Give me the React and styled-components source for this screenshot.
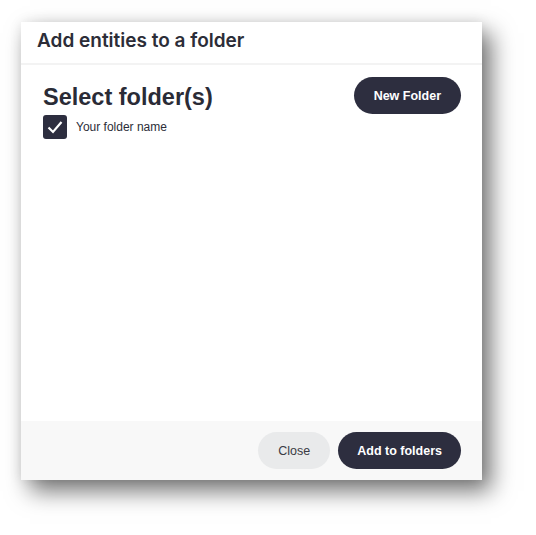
import React, { useState } from 'react';
import styled, { createGlobalStyle } from 'styled-components';

const GlobalStyle = createGlobalStyle`
  body {
    margin: 0;
    background: #ffffff;
    font-family: "Liberation Sans", Arial, sans-serif;
  }
`;

const Page = styled.div`
  padding: 22px 0 0 21px;
  width: 536px;
  height: 535px;
  box-sizing: border-box;
`;

const Modal = styled.div`
  width: 461px;
  height: 458px;
  background: #ffffff;
  display: flex;
  flex-direction: column;
  box-shadow: 9px 11px 22px rgba(0, 0, 0, 0.55), 0 0 12px rgba(0, 0, 0, 0.08);
`;

const Header = styled.div`
  height: 43px;
  box-sizing: border-box;
  padding: 7px 16px 0 16px;
  border-bottom: 2px solid #f3f3f3;
  font-family: Inter, "Liberation Sans", sans-serif;
  font-size: 19px;
  font-weight: 600;
  color: #2c2d38;
`;

const Body = styled.div`
  flex: 1;
  padding: 12px 21px 0 22px;
`;

const TopRow = styled.div`
  display: flex;
  justify-content: space-between;
  align-items: flex-start;
`;

const Heading = styled.h2`
  margin: 6px 0 0 0;
  font-size: 23.5px;
  font-weight: 700;
  color: #2a2b36;
  line-height: 28px;
`;

const Button = styled.button`
  height: 37px;
  border: none;
  border-radius: 19px;
  padding: 0 ${({ $pad }) => $pad || 20}px;
  font-family: "Liberation Sans", Arial, sans-serif;
  font-size: 12.5px;
  cursor: pointer;
  background: ${({ $variant }) => ($variant === 'ghost' ? '#e9eaeb' : '#2d2e3f')};
  color: ${({ $variant }) => ($variant === 'ghost' ? '#3a3b44' : '#ffffff')};
  font-weight: ${({ $variant }) => ($variant === 'ghost' ? 400 : 700)};
`;

const Option = styled.label`
  display: flex;
  align-items: center;
  gap: 9px;
  margin-top: 1px;
  font-size: 12px;
  color: #2c2d38;
  cursor: pointer;
`;

const Box = styled.span`
  width: 24px;
  height: 24px;
  border-radius: 3px;
  background: ${({ $checked }) => ($checked ? '#2d2e3f' : '#ffffff')};
  border: ${({ $checked }) => ($checked ? 'none' : '1px solid #9a9aa3')};
  box-sizing: border-box;
  display: flex;
  align-items: center;
  justify-content: center;
`;

const Footer = styled.div`
  height: 59px;
  background: #f8f8f8;
  display: flex;
  justify-content: flex-end;
  align-items: center;
  gap: 8px;
  padding: 0 21px 0 0;
  box-sizing: border-box;
`;

const App = () => {
  const [checked, setChecked] = useState(true);

  return (
    <Page>
      <GlobalStyle />
      <Modal>
        <Header>Add entities to a folder</Header>
        <Body>
          <TopRow>
            <Heading>Select folder(s)</Heading>
            <Button $pad={20}>New Folder</Button>
          </TopRow>
          <Option onClick={() => setChecked(!checked)}>
            <Box $checked={checked}>
              {checked && (
                <svg width="18" height="18" viewBox="0 0 18 18">
                  <path d="M2.5 9.5 L7 14 L15.5 4" fill="none" stroke="#ffffff" strokeWidth="2.2" />
                </svg>
              )}
            </Box>
            Your folder name
          </Option>
        </Body>
        <Footer>
          <Button $variant="ghost" $pad={20}>Close</Button>
          <Button $pad={19}>Add to folders</Button>
        </Footer>
      </Modal>
    </Page>
  );
};

export default App;
